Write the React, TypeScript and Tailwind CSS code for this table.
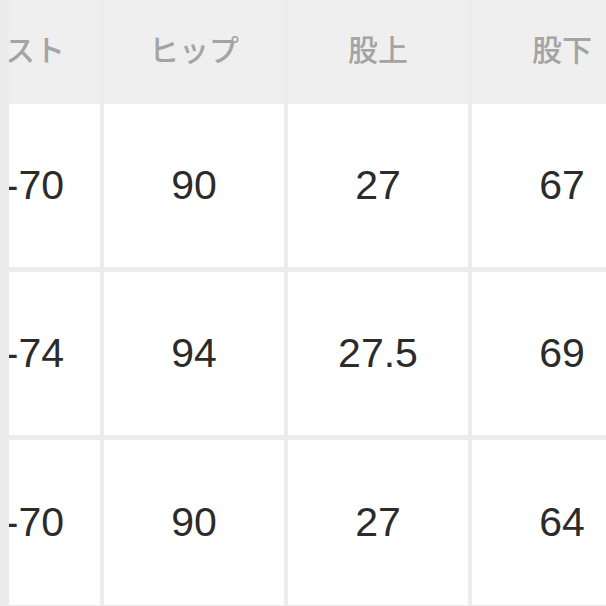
const head = ["ヒップ", "股上", "股下"];

const rows = [
  { waist: "58-70", cells: ["90", "27", "67"], h: "h-[163px]" },
  { waist: "62-74", cells: ["94", "27.5", "69"], h: "h-[163px]" },
  { waist: "58-70", cells: ["90", "27", "64"], h: "h-[165px]" },
];

export default function App() {
  return (
    <div className="h-[606px] w-[606px] overflow-hidden bg-[#ececec]">
      <div className="flex h-[104px] gap-[4px] pl-[9px] font-['Noto_Sans_CJK_JP','Noto_Sans',sans-serif] text-[30px] font-medium text-[#a4a4a4]">
        <div className="flex w-[91px] shrink-0 items-center justify-end overflow-hidden bg-[#efefef] pb-[8px] pr-[35px]">
          <span className="whitespace-nowrap">ウエスト</span>
        </div>
        {head.map((t) => (
          <div
            key={t}
            className="flex w-[180px] shrink-0 items-center justify-center bg-[#efefef] pb-[8px]"
          >
            {t}
          </div>
        ))}
      </div>
      <div className="flex flex-col gap-[5px] font-['Liberation_Sans',Arial,sans-serif] text-[41px] text-[#2b2b2b]">
        {rows.map((r, i) => (
          <div key={i} className={`flex gap-[4px] pl-[9px] ${r.h}`}>
            <div className="flex w-[91px] shrink-0 items-center justify-end overflow-hidden bg-white pr-[36px]">
              <span className="whitespace-nowrap">{r.waist}</span>
            </div>
            {r.cells.map((c, j) => (
              <div
                key={j}
                className="flex w-[180px] shrink-0 items-center justify-center bg-white"
              >
                {c}
              </div>
            ))}
          </div>
        ))}
      </div>
    </div>
  );
}
